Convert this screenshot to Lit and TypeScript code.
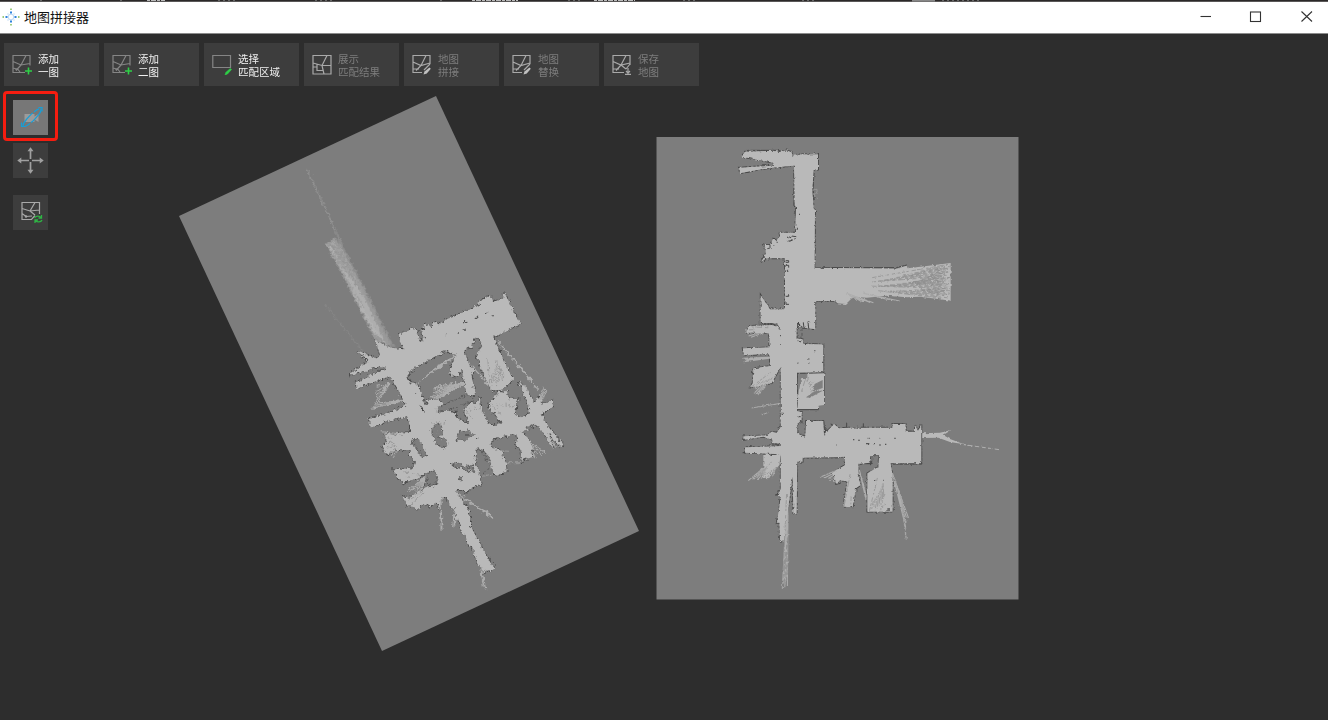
import { LitElement, html, svg, css } from "lit";
import { customElement } from "lit/decorators.js";

type Pt = [number, number];
type Area = [string, string];

/** A group of thin rays from one point to evenly spaced ends. */
function rays(from: Pt, a: Pt, b: Pt, n: number, dark = false) {
  let d = "";
  for (let i = 0; i < n; i++) {
    const t = n === 1 ? 0 : i / (n - 1);
    const k = 1 - ((i * 37) % 11) / 90;
    const x = a[0] + (b[0] - a[0]) * t;
    const y = a[1] + (b[1] - a[1]) * t;
    const s = dark ? 0.35 + ((i * 29) % 10) / 20 : 0;
    const x0 = from[0] + (x - from[0]) * s;
    const y0 = from[1] + (y - from[1]) * s;
    d += `M${x0.toFixed(1)} ${y0.toFixed(1)}L${(from[0] + (x - from[0]) * k).toFixed(1)} ${(from[1] + (y - from[1]) * k).toFixed(1)}`;
  }
  return svg`<path class=${dark ? "ray-dark" : "ray"} d=${d}></path>`;
}

const T_UPPER = "translate(300 280) scale(.33333)";
const T_LOWER = "translate(340 400) scale(.33333)";
const T_ROOMS = "translate(410 360) scale(.33333)";
const T_BEAM = "translate(295 160) scale(.33333)";
const T_NORTH = "translate(720 130) scale(.33333)";
const T_SOUTH = "translate(720 310) scale(.33333)";

const leftAreas: Area[] = [
  [T_UPPER, "225,178 258,198 285,205 310,208 295,163 345,143 362,185 375,173 362,155 375,148 370,138 382,133 395,142 400,125 410,122 415,134 440,118 458,110 540,75 535,65 572,45 580,65 610,55 612,35 622,55 662,133 620,152 580,172 605,230 640,298 620,315 608,328 575,335 555,290 530,232 545,195 538,175 520,172 518,198 492,212 502,238 508,258 524,272 515,286 525,345 500,345 485,270 465,292 447,280 455,255 470,225 450,220 440,210 330,272 322,290 335,322 352,310 360,330 375,375 410,365 400,390 410,415 385,425 390,455 425,510 370,510 350,475 340,510 265,510 245,500 262,485 250,460 300,465 330,455 335,405 285,418 212,440 205,415 260,402 320,375 310,360 292,325 270,290 220,305 172,325 165,308 258,265 240,258 150,287 150,280 205,245 170,210 190,218 225,235 240,225"],
  [T_LOWER, "190,0 260,0 270,60 300,130 250,200 280,212 297,252 260,262 205,294 190,288 202,318 225,322 228,332 250,310 268,320 290,308 300,333 303,295 318,290 333,320 348,335 347,358 362,370 365,400 375,402 385,440 395,440 412,485 430,517 445,508 452,515 464,505 430,450 390,375 390,345 380,318 350,278 350,255 380,277 395,262 425,252 410,150 440,100 360,60 300,0"],
  [T_LOWER, "215,20 170,38 130,45 85,58 97,72 95,83 145,58 200,48 215,95 175,98 165,108 145,115 130,148 140,163 180,145 215,125 235,165 250,175 225,182 220,205 160,208 170,228 190,250 230,235 275,212 310,210 300,100"],
  [T_ROOMS, "0,65 20,72 45,150 75,145 78,172 60,180 90,175 105,165 137,155 140,190 160,205 180,195 160,150 185,125 195,130 210,115 215,150 235,190 260,198 278,188 265,178 255,160 242,155 235,130 250,120 265,95 280,98 290,90 295,118 325,115 315,160 330,175 360,160 352,125 326,65 345,80 360,110 372,130 385,110 395,135 425,120 430,140 395,162 415,200 460,255 450,262 412,215 432,267 385,195 335,215 365,250 366,290 350,300 342,292 335,307 330,265 315,255 325,230 310,222 245,240 240,262 280,275 278,290 288,310 290,335 275,340 260,348 245,325 240,295 220,270 200,265 190,310 210,350 215,370 170,390 100,390 0,290"],
];

const rightAreas: Area[] = [
  [T_NORTH, "222,73 294,73 294,119 281,122 277,180 281,235 285,240 284,415 350,415 350,511 286,513 286,598 230,590 177,600 172,580 122,580 122,495 150,538 195,538 195,385 140,385 123,396 137,372 137,355 130,345 150,345 160,325 170,330 180,318 178,308 225,308 228,230 224,225 222,107 140,115 60,130 57,113 100,110 162,107 160,98 65,80 75,65 160,62 180,66 200,61 215,67 218,82"],
  [T_SOUTH, "122,0 285,0 285,52 248,52 230,50 230,85 248,88 250,102 310,103 310,187 231,188 231,303 245,307 245,330 232,342 232,370 255,380 258,333 310,333 312,372 330,355 342,342 358,355 380,353 517,353 517,342 557,342 557,365 585,365 585,345 594,362 604,342 604,460 512,460 518,500 518,605 442,605 442,490 475,470 477,436 455,436 450,458 415,462 417,508 422,525 408,535 398,592 370,590 382,515 360,510 348,524 345,505 335,490 375,465 375,440 350,442 248,443 248,455 232,455 230,612 220,612 218,500 205,590 192,690 180,694 178,640 170,640 178,590 182,560 172,555 182,540 182,435 160,432 75,428 75,412 182,408 182,402 155,400 158,390 130,380 70,390 70,379 140,376 155,365 170,368 182,350 182,170 155,220 120,228 90,232 98,220 100,175 150,168 150,140 145,132 72,136 68,115 148,112 148,80 145,70 78,68 85,48 155,45 175,48 180,40 122,40"],
];

const outline = (list: Area[]) => list.map(([t, p]) => svg`<polygon class="outline" transform=${t} points=${p}></polygon>`);
const floor = (list: Area[]) => list.map(([t, p]) => svg`<polygon class="floor" transform=${t} points=${p}></polygon>`);

const icons: Record<string, () => unknown> = {
  add: () => svg`
    <path class="g dim" d="M13 18.500H1V1.500H18V11.500M1 7.500L9 11L18 9.500M9 11L14 1.500M9 11L4 16.500M1 14L6 15.500L8 18"></path>
    <circle cx="4.500" cy="15.500" r="1.100" fill="#858585"></circle>
    <path d="M16.500 13.500v7M13 17h7" stroke="#2ed047" stroke-width="1.600" fill="none"></path>`,
  select: () => svg`
    <path class="g dim" d="M.8 1.500H18.500V13.500H.8Z"></path>
    <path d="M13 21l1-2.700 4.300-3.800 1.200 1-4 4.500z" fill="#2ed047" stroke="#2ed047" stroke-width=".6"></path>`,
  result: () => svg`
    <path class="g lit" d="M1 1.500H19V20H1ZM1 9L10 11.500H19M10 11.500L15 1.500M5 10V17M5 16.500H11M10 11.500L12 20M1 13H5"></path>`,
  stitch: () => svg`
    <path class="g lit" d="M18 10V1.500H1V18.500H10M1 8L9 11.500L18 9M9 11.500L14 1.500M9 11.500L4 16.500M1 15H7M12 16L18 10"></path>
    <path d="M11.500 20.500l1-3 5-4 1.300 1.200-4 4.800z" fill="#c0c0c0"></path>`,
  save: () => svg`
    <path class="g lit" d="M18 11V1.500H1V18.500H12M1 7.500L9 11L18 9M9 11L14 1.500M9 11L4 16.500M1 15H7M9 11L14 15M14 15L18 10"></path>
    <path d="M16 14v5M14 17l2 2.200 2-2.200M13 20.300h6" class="g lit"></path>`,
  orbit: () => svg`
    <path d="M4.500 8h10v2.500l4-2.500v8l-4-2.500v2.500h-10z" fill="#9b9b9b"></path>
    <ellipse cx="12" cy="11.700" rx="12.300" ry="3" transform="rotate(-45 12 11.700)" fill="none" stroke="#169fd8" stroke-width="1.200" stroke-dasharray="17 1.500 6 1.500"></ellipse>
    <path d="M18.500 1.500h3.500v4M1.500 16.500v4h4" fill="none" stroke="#169fd8" stroke-width="1.200"></path>`,
  move: () => svg`
    <path d="M13.500 12V2M13.500 15V25M12 13.500H2M15 13.500H25" stroke="#a0a0a0" stroke-width="1.700"></path>
    <path d="M10.500 4.300L13.500.3l3 4zM10.500 22.700l3 4 3-4zM4.300 10.500L.3 13.500l4 3zM22.700 10.500l4 3-4 3z" fill="#a0a0a0"></path>`,
  refresh: () => svg`
    <path class="g lit" d="M19.500 13V1.500H2V18.500H11.500L15 14.500M2 7.500L10 10L19.500 9M10 10L15 1.500M10 10L15 14M2 12.500L6 15.500L12 15"></path>
    <circle cx="6" cy="15.500" r="1.200" fill="#a9a9a9"></circle>
    <path d="M14.500 17c1-2.500 5-2.500 6.500-.5M21.500 14v3h-3M22 19c-1 2.500-5 2.500-6.500.5M15 22v-3h3" fill="none" stroke="#2fb344" stroke-width="1.300"></path>`,
};

const tools = [
  { icon: "add", a: "添加", b: "一图", on: true },
  { icon: "add", a: "添加", b: "二图", on: true },
  { icon: "select", a: "选择", b: "匹配区域", on: true },
  { icon: "result", a: "展示", b: "匹配结果", on: false },
  { icon: "stitch", a: "地图", b: "拼接", on: false },
  { icon: "stitch", a: "地图", b: "替换", on: false },
  { icon: "save", a: "保存", b: "地图", on: false },
];

@customElement("app-root")
export class AppRoot extends LitElement {
  static styles = css`
    :host {
      display: block;
      height: 720px;
      background: #2d2d2d;
      font-family: "Noto Sans CJK SC", sans-serif;
      overflow: hidden;
    }
    .window { display: grid; grid-template-rows: 2px 32px 1fr; height: 720px; }
    .edge { display: block; width: 100%; height: 2px; background: #2b2828; }
    .title {
      display: flex; align-items: center; background: #fff; color: #111;
      font-size: 13px; box-sizing: border-box; border-bottom: 1px solid #8b8b8b; padding-bottom: 2px;
    }
    .logo { width: 18px; height: 18px; margin: 0 4px 0 2px; }
    .name { flex: 1; line-height: 28px; }
    .controls { display: flex; }
    .controls svg { width: 50.500px; height: 29px; fill: none; stroke: #333; stroke-width: 1.100; }
    .body { position: relative; overflow: hidden; }
    .stage { position: absolute; left: 0; top: 0; width: 1328px; height: 686px; }
    .overlay { position: relative; }
    .bar { display: flex; gap: 5px; padding: 9px 4px 0; }
    .tool {
      display: flex; align-items: center; box-sizing: border-box; width: 95px; height: 43px;
      padding-left: 8px; gap: 5px; background: #3d3d3d; color: #f0f0f0;
      font-size: 10.500px; line-height: 13px;
    }
    .tool.off { color: #7d7d7d; }
    .tool svg { width: 21px; height: 21px; }
    .label { display: flex; flex-direction: column; white-space: nowrap; }
    .side { display: flex; flex-direction: column; align-items: flex-start; padding: 5px 0 0 3px; }
    .mark { border: 3px solid #f51d10; border-radius: 4px; padding: 6px 7px 3px 7px; }
    .square { display: grid; place-items: center; width: 35px; height: 35px; background: #3d3d3d; }
    .square.active { background: #777; }
    .square svg { width: 22px; height: 23px; overflow: visible; }
    .square .wide { width: 27px; height: 27px; }
    .gap1 { margin: 2px 0 0 10px; }
    .gap2 { margin: 17px 0 0 10px; }
    .g { fill: none; stroke-width: 1.200; }
    .dim { stroke: #858585; }
    .lit { stroke: #a9a9a9; }
    .pane { fill: #7d7d7d; }
    .outline { fill: none; stroke: #454545; stroke-width: 5; stroke-dasharray: 7 6 4 5 17 4 5 9; }
    .floor { fill: #b9b9b9; }
    .hole { fill: #7d7d7d; stroke: #505050; stroke-width: 2.500; stroke-dasharray: 5 6 9 4; }
    .ray { fill: none; stroke: #aeaeae; stroke-width: 3.200; }
    .ray-dark { fill: none; stroke: #868686; stroke-width: 1.900; stroke-dasharray: 13 5 22 4 7 9; }
    .dots { fill: none; stroke: #555; stroke-width: 4; }
    .wall { fill: none; stroke: #474747; stroke-width: 3; }
  `;

  private leftMap() {
    return svg`
      <polygon class="pane" points="436,96 639,531 382,651 179,216"></polygon>
      <g filter="url(#rough)">
        ${outline(leftAreas)}
        <g transform=${T_BEAM}>
          <path d="M38 28L125 215L300 565L240 535L160 380L125 225Z" fill="#8e8e8e"></path>
          <path d="M92 252L120 230L195 365L290 558L240 540L160 380Z" fill="#9a9a9a"></path>
          <path d="M112 262L180 365L270 550L230 510L165 380L98 258Z" fill="#b3b3b3"></path>
          ${rays([275, 560], [95, 255], [122, 232], 6)}
          ${rays([265, 540], [98, 262], [125, 240], 9, true)}
          <path d="M36 28L122 212" stroke="#a0a0a0" stroke-width="3" stroke-dasharray="16 4"></path>
          <path d="M90 435L205 575" stroke="#a2a2a2" stroke-width="2" stroke-dasharray="6 4"></path>
        </g>
        <g transform=${T_UPPER}>
          ${rays([470, 225], [350, 310], [410, 260], 6)}
          ${rays([500, 305], [385, 375], [400, 320], 8)}
          ${rays([270, 310], [218, 390], [228, 320], 5)}
          ${rays([595, 185], [695, 300], [715, 330], 4)}
          ${rays([500, 240], [560, 310], [580, 330], 4)}
        </g>
        <g transform=${T_LOWER}>
          ${rays([205, 105], [125, 95], [150, 182], 9)}
          ${rays([280, 210], [200, 275], [230, 285], 5)}
          ${rays([350, 280], [460, 355], [465, 352], 3)}
          ${rays([303, 290], [303, 395], [306, 395], 2)}
          ${rays([345, 300], [338, 384], [344, 380], 3)}
          ${rays([420, 490], [430, 560], [438, 572], 2)}
          ${rays([200, 0], [95, 25], [105, 10], 3)}
          <path d="M418 188H545M410 232L460 222M455 150L510 154" stroke="#9b9b9b" stroke-width="3"></path>
        </g>
        <g transform=${T_ROOMS}>
          ${rays([375, 150], [330, 65], [345, 75], 4)}
          ${rays([375, 150], [403, 80], [414, 88], 3)}
          ${rays([325, 220], [408, 280], [370, 300], 5)}
          ${rays([385, 180], [430, 267], [460, 255], 4)}
        </g>
        ${floor(leftAreas)}
        <g transform=${T_UPPER}>
          ${rays([560, 190], [570, 325], [625, 305], 9, true)}
          <path class="dots" d="M490 128h8M488 147h8M473 159h4M437 164h5M528 112h4M558 100h4M578 108h4M346 343h6M500 127h3"></path>
          <path class="wall" d="M360 372l12 26M325 290l8-10 12-8"></path>
        </g>
        <g transform=${T_ROOMS}>
          <path class="hole" d="M62 205l28-14 12 28-20 12 29 10v16l-12 8-22-14zM148 215l25-5 20 15-25 15-30 2zM198 272l12-6 32 55-30 28-12-35zM128 313l10-6 15 5-2 12-18 2zM155 318l20 0 4 18-15-1zM10 240l14-4 24 50-14 5-28-40zM145 353l12-5-4 17zM177 320l12-8 4 26-12-4zM45 342l18-10 20 35-28 14zM82 160l60-20 50-20-15-18-95 40zM350 198l28-5-24 15z"></path>
          ${rays([290, 180], [240, 130], [320, 120], 6, true)}
          ${rays([200, 190], [165, 150], [210, 130], 4, true)}
          ${rays([95, 240], [65, 185], [105, 175], 4, true)}
          <path class="dots" d="M100 262l8 6M195 235h8M122 310h5M190 290h6M300 200h3M165 225h14M265 188l12-5"></path>
        </g>
        <g transform=${T_LOWER}>
          <path class="hole" d="M218 120l18-4 24 52-12 5zM268 215l14-5 14 38-40 7z"></path>
          ${rays([300, 240], [190, 215], [205, 318], 8, true)}
          ${rays([220, 110], [135, 100], [145, 175], 6, true)}
        </g>
      </g>`;
  }

  private rightMap() {
    return svg`
      <rect class="pane" x="656.500" y="137" width="362" height="462.500"></rect>
      <g filter="url(#fine)">
        ${outline(rightAreas)}
        <g transform=${T_NORTH}>
          <path class="wall" d="M215 64h-30l-10-3h-95M221 74h74v46M282 123l-3 55 4 35M284 238v175h245l32-8M287 513h57l8 8M221 78v30M222 178v50l5 5v75" stroke-dasharray="28 5 60 3"></path>
          <polygon class="floor" points="280,413 530,416 560,407 563,415 620,408 692,399 692,512 660,508 600,500 560,502 500,497 440,503 400,500 378,522 352,520 345,513 280,513"></polygon>
          ${rays([380, 490], [410, 512], [465, 520], 5)}
          ${rays([430, 490], [500, 508], [540, 513], 4)}
        </g>
        <g transform=${T_SOUTH}>
          ${rays([180, 50], [75, 60], [88, 84], 5)}
          ${rays([182, 140], [70, 145], [70, 155], 4)}
          ${rays([182, 170], [95, 230], [105, 265], 6)}
          ${rays([182, 430], [85, 512], [155, 508], 9)}
          ${rays([400, 460], [300, 502], [345, 522], 6)}
          ${rays([517, 490], [558, 655], [566, 625], 4)}
          ${rays([418, 480], [438, 570], [442, 570], 3)}
          ${rays([205, 480], [187, 836], [202, 836], 7)}
          <path d="M517 490l28 80 14 120" fill="none" stroke="#a6a6a6" stroke-width="4" stroke-dasharray="9 3"></path>
          <path d="M182 280L95 294M125 315l20-8" stroke="#aaa" stroke-width="3"></path>
          <path class="floor" d="M605 370L660 368L694 360L670 375L690 387L732 403L690 396L655 383L605 384Z"></path>
          <path d="M725 403L838 419" stroke="#b0b0b0" stroke-width="3" stroke-dasharray="13 7"></path>
          <path class="wall" d="M250 103h61v86h-79v82M312 190v95M232 299h64M183 190v115M258 375V333h53l3 38M380 353v-15M430 353v-13M475 353h42v-11h40v22h28M605 342v120h-90M455 458v-22h22v24M232 455l16-12h105M415 461h40M442 490v115h76v-10M68 114h80v-30M75 412h108M232 458v50M150 137h32M182 440v75"></path>
        </g>
        ${floor(rightAreas)}
        <g transform=${T_NORTH}>
          ${rays([330, 465], [692, 402], [692, 508], 30, true)}
          ${rays([500, 455], [692, 408], [692, 502], 17, true)}
          <path class="wall" d="M197 392h9v5h-9M196 406h10v7M197 424h8M196 494h10v5h-9M198 514v9h9M203 319l10 4 4 8-14 3M214 318l14 2-4 8M150 345v9l-8 2M163 324l5 7M233 598v-20l8 8M250 577l2 18M264 575l2 20M302 415h12"></path>
          <path d="M280 178h11v8l-8 12 7 8" fill="none" stroke="#989898" stroke-width="3"></path>
          <path class="dots" d="M237 253h3M160 348h3M170 337h3M232 293v9"></path>
        </g>
        <g transform=${T_SOUTH}>
          <polygon class="floor" points="240,193 312,190 312,285 296,287 295,297 232,297"></polygon>
          <polygon class="floor" points="130,435 182,435 178,465 145,505 125,500 142,475 130,470"></polygon>
          <path d="M234 192h28v12h-18l-6 34h-5zM258 262l26-18 24-2-40 22zM284 222l24-12v24l-30 10z" fill="#808080"></path>
          ${rays([236, 272], [260, 195], [310, 240], 8, true)}
          ${rays([485, 450], [448, 604], [494, 604], 9, true)}
          ${rays([400, 440], [372, 590], [392, 590], 2, true)}
          ${rays([182, 430], [105, 505], [158, 508], 7, true)}
          ${rays([182, 165], [95, 230], [140, 228], 6, true)}
          ${rays([180, 55], [80, 50], [80, 70], 3, true)}
          ${rays([206, 400], [188, 835], [203, 835], 6, true)}
          <path class="hole" d="M232 345l14-8 9 8v32l-20-6zM232 55l14-6v32l-14 2z"></path>
          <path class="dots" d="M232 159h3M265 147h3M265 159h3M283 122h3M236 320h6M185 310h6M350 406h4M399 389h4M414 390h4M438 401h10M446 385h3M459 401h5M479 385h3M478 405h4M495 403h4M523 385h4M462 511h4M490 511h4M502 600h8M306 157h5M180 77h3M180 105h3M236 92h8M312 366l12-6M448 455h7M265 35h3M176 56h6M182 350h-9"></path>
          <path class="wall" d="M122 41l35 0 8 6 12 2 3 10M232 40l12 4M316 352l6 12h-8v12M332 342l8 4M345 523l18-3M175 540l-4 16M171 640h9M155 402h24M68 428h8M92 235l8-2" stroke-dasharray="7 3"></path>
        </g>
      </g>`;
  }

  render() {
    return html`
      <div class="window">
        <svg class="edge" viewBox="0 0 1328 2" preserveAspectRatio="none">
          <path d="M0 1.750H1328" stroke="#aaa" stroke-width=".5"></path>
          <path d="M147 .5h18M472 .5h46M594 .5h41" stroke="#bbb" stroke-width="1" stroke-dasharray="3 1 5 1"></path>
          <path d="M40 .5h4M120 .5h2M218 .5h18M315 .5h18M440 .5h3M568 .5h14M683 .5h12M802 .5h12M942 .5h38" stroke="#666" stroke-width="1" stroke-dasharray="2 3"></path>
          <path d="M912 .8h23" stroke="#888" stroke-width="1.600"></path>
        </svg>
        <header class="title">
          <svg class="logo" viewBox="0 0 18 18">
            <circle cx="9" cy="9" r="2.800" fill="#fff" stroke="#a9cdf0" stroke-width=".8"></circle>
            <path d="M8 3.500h2v2H8zM8 12.500h2v2H8zM3.500 8h2v2h-2zM12.500 8h2v2h-2z" fill="#2f83dd"></path>
            <path d="M8.300.500h1.400v1.500H8.300zM8.300 16h1.400v1.500H8.300zM.5 8.300H2v1.400H.5zM16 8.300h1.500v1.400H16z" fill="#79b84f"></path>
            <path d="M5.500 5.500h1v1h-1zM11.500 5.500h1v1h-1zM5.500 11.500h1v1h-1zM11.500 11.500h1v1h-1z" fill="#9ac7ef"></path>
          </svg>
          <span class="name">地图拼接器</span>
          <div class="controls">
            <svg viewBox="0 0 50.500 29"><path d="M23.500 14.500h10.500"></path></svg>
            <svg viewBox="0 0 50.500 29"><rect x="23.500" y="10" width="10" height="9.500"></rect></svg>
            <svg viewBox="0 0 50.500 29"><path d="M23.500 9.500l10.500 10M34 9.500l-10.500 10"></path></svg>
          </div>
        </header>
        <main class="body">
          <svg class="stage" viewBox="0 34 1328 686">
            <defs>
              <filter id="rough" filterUnits="userSpaceOnUse" x="170" y="90" width="480" height="570" color-interpolation-filters="sRGB">
                <feTurbulence type="fractalNoise" baseFrequency=".3" numOctaves="2" seed="4" result="n"></feTurbulence>
                <feDisplacementMap in="SourceGraphic" in2="n" scale="5.500" xChannelSelector="R" yChannelSelector="G"></feDisplacementMap>
              </filter>
              <filter id="fine" filterUnits="userSpaceOnUse" x="656" y="137" width="363" height="463" color-interpolation-filters="sRGB">
                <feTurbulence type="fractalNoise" baseFrequency=".3" numOctaves="2" seed="9" result="n"></feTurbulence>
                <feDisplacementMap in="SourceGraphic" in2="n" scale="2.800" xChannelSelector="R" yChannelSelector="G"></feDisplacementMap>
              </filter>
            </defs>
            ${this.leftMap()}${this.rightMap()}
          </svg>
          <div class="overlay">
            <nav class="bar">
              ${tools.map((t) => html`
                <div class="tool ${t.on ? "" : "off"}">
                  <svg viewBox="0 0 21 21">${icons[t.icon]()}</svg>
                  <div class="label"><span>${t.a}</span><span>${t.b}</span></div>
                </div>`)}
            </nav>
            <aside class="side">
              <div class="mark"><div class="square active"><svg viewBox="0 0 22 23">${icons.orbit()}</svg></div></div>
              <div class="square gap1"><svg class="wide" viewBox="0 0 27 27">${icons.move()}</svg></div>
              <div class="square gap2"><svg viewBox="0 0 22 23">${icons.refresh()}</svg></div>
            </aside>
          </div>
        </main>
      </div>`;
  }
}
